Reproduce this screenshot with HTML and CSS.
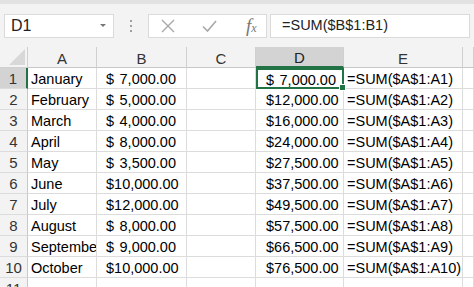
FILE: index.html
```html
<!DOCTYPE html>
<html lang="en">

<head>
    <meta charset="UTF-8">
    <title>Running Total</title>
    <link rel="stylesheet" href="styles.css">
</head>

<body>
    <div class="toolbar">
        <div class="name-box">
            <span>D1</span>
            <span class="caret"></span>
        </div>
        <div class="grip"><i></i><i></i><i></i></div>
        <div class="fx-buttons">
            <svg class="icon" width="14" height="14" viewBox="0 0 14 14">
                <path d="M1 1 L13 13 M13 1 L1 13" stroke="#a8a8a8" stroke-width="1.4" fill="none" />
            </svg>
            <svg class="icon" width="15" height="14" viewBox="0 0 15 14">
                <path d="M1 7.5 L5.5 12 L14 2" stroke="#a8a8a8" stroke-width="1.6" fill="none" />
            </svg>
            <span class="fx">f<sub>x</sub></span>
        </div>
        <div class="formula">=SUM($B$1:B1)</div>
    </div>

    <div class="sheet">
        <div class="corner"><span class="tri"></span></div>
        <div class="col-head">A</div>
        <div class="col-head">B</div>
        <div class="col-head">C</div>
        <div class="col-head active">D</div>
        <div class="col-head">E</div>
        <div class="col-head"></div>

        <div class="row-head active">1</div>
        <div class="cell">January</div>
        <div class="cell money"><span>$</span><span>7,000.00</span></div>
        <div class="cell"></div>
        <div class="cell money total selected"><span>$</span><span>7,000.00</span><i class="handle"></i></div>
        <div class="cell">=SUM($A$1:A1)</div>
        <div class="cell"></div>

        <div class="row-head">2</div>
        <div class="cell">February</div>
        <div class="cell money"><span>$</span><span>5,000.00</span></div>
        <div class="cell"></div>
        <div class="cell money total"><span>$</span><span>12,000.00</span></div>
        <div class="cell">=SUM($A$1:A2)</div>
        <div class="cell"></div>

        <div class="row-head">3</div>
        <div class="cell">March</div>
        <div class="cell money"><span>$</span><span>4,000.00</span></div>
        <div class="cell"></div>
        <div class="cell money total"><span>$</span><span>16,000.00</span></div>
        <div class="cell">=SUM($A$1:A3)</div>
        <div class="cell"></div>

        <div class="row-head">4</div>
        <div class="cell">April</div>
        <div class="cell money"><span>$</span><span>8,000.00</span></div>
        <div class="cell"></div>
        <div class="cell money total"><span>$</span><span>24,000.00</span></div>
        <div class="cell">=SUM($A$1:A4)</div>
        <div class="cell"></div>

        <div class="row-head">5</div>
        <div class="cell">May</div>
        <div class="cell money"><span>$</span><span>3,500.00</span></div>
        <div class="cell"></div>
        <div class="cell money total"><span>$</span><span>27,500.00</span></div>
        <div class="cell">=SUM($A$1:A5)</div>
        <div class="cell"></div>

        <div class="row-head">6</div>
        <div class="cell">June</div>
        <div class="cell money"><span>$</span><span>10,000.00</span></div>
        <div class="cell"></div>
        <div class="cell money total"><span>$</span><span>37,500.00</span></div>
        <div class="cell">=SUM($A$1:A6)</div>
        <div class="cell"></div>

        <div class="row-head">7</div>
        <div class="cell">July</div>
        <div class="cell money"><span>$</span><span>12,000.00</span></div>
        <div class="cell"></div>
        <div class="cell money total"><span>$</span><span>49,500.00</span></div>
        <div class="cell">=SUM($A$1:A7)</div>
        <div class="cell"></div>

        <div class="row-head">8</div>
        <div class="cell">August</div>
        <div class="cell money"><span>$</span><span>8,000.00</span></div>
        <div class="cell"></div>
        <div class="cell money total"><span>$</span><span>57,500.00</span></div>
        <div class="cell">=SUM($A$1:A8)</div>
        <div class="cell"></div>

        <div class="row-head">9</div>
        <div class="cell clip">September</div>
        <div class="cell money"><span>$</span><span>9,000.00</span></div>
        <div class="cell"></div>
        <div class="cell money total"><span>$</span><span>66,500.00</span></div>
        <div class="cell">=SUM($A$1:A9)</div>
        <div class="cell"></div>

        <div class="row-head">10</div>
        <div class="cell">October</div>
        <div class="cell money"><span>$</span><span>10,000.00</span></div>
        <div class="cell"></div>
        <div class="cell money total"><span>$</span><span>76,500.00</span></div>
        <div class="cell">=SUM($A$1:A10)</div>
        <div class="cell"></div>

        <div class="row-head">11</div>
        <div class="cell"></div>
        <div class="cell"></div>
        <div class="cell"></div>
        <div class="cell"></div>
        <div class="cell"></div>
        <div class="cell"></div>
    </div>
</body>

</html>
```

FILE: styles.css
```css
/* General styles */
body {
    margin: 0;
    width: 474px;
    height: 287px;
    overflow: hidden;
    background: #fff;
    font-family: "Liberation Sans", Arial, sans-serif;
    color: #000;
}

/* Formula bar */
.toolbar {
    display: flex;
    align-items: center;
    height: 43px;
    padding: 0 0 0 4px;
    background: #f3f3f3;
    border-top: 4px solid #e2e2e2;
}

.name-box {
    display: flex;
    align-items: center;
    justify-content: space-between;
    box-sizing: border-box;
    width: 110px;
    height: 24px;
    padding: 0 7px 0 6px;
    background: #fff;
    border: 1px solid #dadada;
    font-size: 16px;
    color: #222;
}

.caret {
    width: 0;
    height: 0;
    border-left: 3px solid transparent;
    border-right: 3px solid transparent;
    border-top: 3px solid #777;
}

.grip {
    display: flex;
    flex-direction: column;
    gap: 3px;
    width: 34px;
    align-items: center;
}

.grip i {
    width: 2px;
    height: 2px;
    background: #a0a0a0;
}

.fx-buttons {
    display: flex;
    align-items: center;
    box-sizing: border-box;
    width: 119px;
    height: 24px;
    padding: 0 0 0 12px;
    gap: 27px;
    background: #fff;
    border: 1px solid #dadada;
}

.fx {
    font-family: "Liberation Serif", serif;
    font-style: italic;
    font-size: 19px;
    color: #777;
    margin-left: 2px;
}

.fx sub {
    font-size: 12px;
    vertical-align: 0;
}

.formula {
    flex: 1;
    box-sizing: border-box;
    height: 24px;
    margin: 0 4px 0 3px;
    padding: 2px 0 0 11px;
    background: #fff;
    border: 1px solid #dadada;
    font-size: 14.5px;
    color: #222;
}

/* Grid */
.sheet {
    display: grid;
    grid-template-columns: 28px 69px 90px 69px 88px 119px 1fr;
    grid-template-rows: 21px;
    grid-auto-rows: 21px;
    font-size: 14.5px;
}

.col-head,
.row-head,
.corner {
    background: #f3f3f3;
    color: #333;
    box-sizing: border-box;
}

.corner {
    position: relative;
    border-right: 1px solid #d0d0d0;
    border-bottom: 1px solid #d0d0d0;
}

.corner .tri {
    position: absolute;
    right: 2px;
    bottom: 2px;
    width: 0;
    height: 0;
    border-left: 16px solid transparent;
    border-bottom: 16px solid #d8d8d8;
}

.col-head {
    display: flex;
    align-items: center;
    justify-content: center;
    font-size: 15px;
    border-right: 1px solid #d0d0d0;
    border-bottom: 1px solid #c8c8c8;
    padding-top: 2px;
}

.col-head.active {
    background: #d3d3d3;
    border-bottom: 2px solid #217346;
    color: #222;
}

.row-head {
    display: flex;
    align-items: center;
    justify-content: center;
    font-size: 15px;
    border-right: 1px solid #c8c8c8;
    border-bottom: 1px solid #dcdcdc;
}

.row-head.active {
    background: #d3d3d3;
    border-right: 2px solid #217346;
}

.cell {
    position: relative;
    display: flex;
    align-items: center;
    box-sizing: border-box;
    padding: 2px 0 0 3px;
    border-right: 1px solid #dcdcdc;
    border-bottom: 1px solid #dcdcdc;
    white-space: nowrap;
    overflow: hidden;
}

.cell.money {
    justify-content: space-between;
    padding: 2px 10px 0 9px;
}

.cell.total {
    padding: 2px 8px 0 10px;
}

.cell.total span:first-child {
    display: none;
}

.cell.total span:last-child::before {
    content: "$";
}

.cell.selected span:first-child {
    display: inline;
}

.cell.selected span:last-child::before {
    content: none;
}

.cell.selected {
    overflow: visible;
    border: 2px solid #217346;
    padding-left: 8px;
    padding-right: 6px;
    z-index: 1;
}

.handle {
    position: absolute;
    right: -4px;
    bottom: -4px;
    width: 5px;
    height: 5px;
    background: #217346;
    border: 1px solid #fff;
}
```
